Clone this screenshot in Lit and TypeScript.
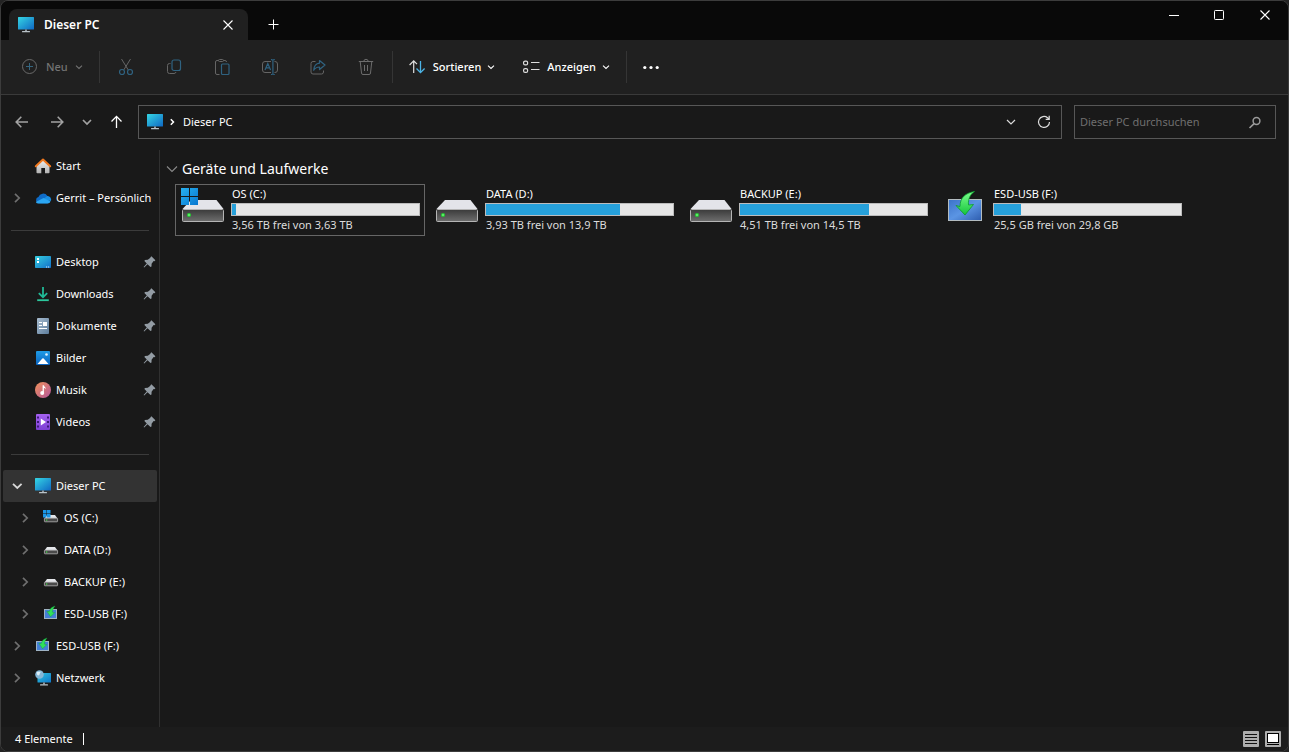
import { LitElement, html, svg, css, nothing, TemplateResult } from "lit";
import { customElement, property } from "lit/decorators.js";

type Icon = TemplateResult;

const screen = (id: string) => svg`
  <defs><linearGradient id=${id} x1="0" y1="0" x2="1" y2="1">
    <stop offset="0" stop-color="#35d6e4"/><stop offset="1" stop-color="#0f68c4"/></linearGradient></defs>
  <rect x="0" y="0" width="16" height="12.5" rx=".6" fill="url(#${id})"/>
  <rect x="7" y="12.500" width="2" height="2" fill="#8f979d"/><rect x="4" y="14" width="8" height="1.3" rx=".4" fill="#b9c2c8"/>`;

const smallDrive = svg`
  <path d="M4 5h8l2.5 3.5h-13z" fill="#e4e6ea"/>
  <rect x="1.4" y="8.2" width="13.2" height="3.6" rx=".5" fill="#4a4a4a" stroke="#b4b4b4" stroke-width=".8"/>
  <rect x="3" y="9.4" width="1.3" height="1.3" fill="#45d64a"/>`;

const smallUsb = svg`
  <rect x="1.5" y="3.500" width="12" height="9" fill="#4480d6" stroke="#9fb3c4"/>
  <path d="M12 0C8.600 1 6.800 2.800 6.200 5.600L3.800 5.200 7.600 10.800 11.800 6.600 9.400 6.200C9.600 3.800 10.400 2 12 0z" fill="#2fe05a" stroke="#129a34" stroke-width=".4"/>`;

const icons: Record<string, Icon> = {
  pc: screen("pcFill"),
  home: svg`
    <defs><linearGradient id="wall" x1="0" y1="0" x2="0" y2="1"><stop offset="0" stop-color="#f1f1f1"/><stop offset="1" stop-color="#b3b3b3"/></linearGradient></defs>
    <path d="M1.500 7.500 8 1.500 14.500 7.500V14.400a.8.8 0 0 1-.8.8H10V10H6.300V15.200H2.300a.8.8 0 0 1-.8-.8z" fill="url(#wall)"/>
    <path d="M.8 8.200 8 1.500 15.200 8.200" fill="none" stroke="#f0781e" stroke-width="2" stroke-linecap="round" stroke-linejoin="round"/>`,
  cloud: svg`
    <path d="M3.400 7A5 5 0 0 1 12.400 6 4 4 0 0 1 12.500 13.200H3.500A3.200 3.200 0 0 1 3.400 7z" fill="#0f6cc8"/>
    <path d="M9 8.500 12.300 6A3.700 3.700 0 0 1 15.900 11L9 9.500z" fill="#1a8fe3"/>
    <path d="M.8 11.900 8.500 8 15.600 11.500A3.300 3.300 0 0 1 12.500 13.500H3.600A3 3 0 0 1 .8 11.900z" fill="#2ba6f2"/>`,
  desktop: svg`
    <defs><linearGradient id="desk" x1="0" y1="0" x2="1" y2="1"><stop offset="0" stop-color="#35cfe0"/><stop offset="1" stop-color="#126fc8"/></linearGradient></defs>
    <rect x="0" y="2" width="16" height="12" rx=".8" fill="url(#desk)"/>
    <rect x="2" y="4" width="2" height="2" fill="#fff"/><rect x="2" y="7" width="2" height="2" fill="#fff"/>
    <path d="M11 13h1.200M13 13h1.200" stroke="#d7ecff"/>`,
  downloads: svg`
    <path d="M8 1V11M3.800 7.200 8 11.200 12.200 7.200" fill="none" stroke="#20b896" stroke-width="1.800"/>
    <path d="M2.200 14.200H13.800" stroke="#2cc79d" stroke-width="1.800"/>`,
  documents: svg`
    <defs><linearGradient id="doc" x1="0" y1="0" x2="1" y2="1"><stop offset="0" stop-color="#a9bdd0"/><stop offset="1" stop-color="#5d7d9c"/></linearGradient></defs>
    <rect x="2" y="0" width="12" height="16" rx="1" fill="url(#doc)"/>
    <path d="M4 4.500H7M4 7.500H7M4 10.500H12" stroke="#fff" stroke-width="1"/><rect x="8" y="4" width="4" height="4" fill="#fff"/>`,
  pictures: svg`
    <defs><linearGradient id="pic" x1="0" y1="0" x2="0" y2="1"><stop offset="0" stop-color="#1f9be6"/><stop offset="1" stop-color="#0a63c0"/></linearGradient></defs>
    <rect x="1" y="1" width="14" height="14" rx="1" fill="url(#pic)"/>
    <path d="M2.500 14 7.300 8.600a1 1 0 0 1 1.400 0L13.500 14z" fill="#fff"/><circle cx="11.500" cy="4.500" r="1.300" fill="#dff1ff"/>`,
  music: svg`
    <defs><linearGradient id="mus" x1="0" y1="0" x2="1" y2="1"><stop offset="0" stop-color="#f0925a"/><stop offset="1" stop-color="#b4559b"/></linearGradient></defs>
    <circle cx="8" cy="8" r="8" fill="url(#mus)"/>
    <path d="M7.600 10.500V3.200H8.900C9 4.800 11 5 11 7.200 10.200 6.200 9.500 6 8.900 6V10.800" fill="#fff"/><circle cx="7.200" cy="10.900" r="2" fill="#fff"/>`,
  videos: svg`
    <defs><linearGradient id="vid" x1="0" y1="0" x2="0" y2="1"><stop offset="0" stop-color="#a561f0"/><stop offset="1" stop-color="#7d3fd3"/></linearGradient></defs>
    <rect x="1" y="0" width="14" height="16" rx="1" fill="url(#vid)"/>
    <path d="M2 2.500h2v2h-2zM2 7h2v2h-2zM2 11.500h2v2h-2zM12 2.500h2v2h-2zM12 7h2v2h-2zM12 11.500h2v2h-2z" fill="#3c1a78"/>
    <path d="M5.800 4.500 11 8 5.800 11.500z" fill="#fff"/>`,
  drive: smallDrive,
  osDrive: svg`${smallDrive}
    <path d="M0 0h3.500v3.500H0zM4 0h3.500v3.500H4zM0 4h3.500v3.500H0zM4 4h3.500v3.500H4z" fill="#1b98e8"/>`,
  usb: smallUsb,
  network: svg`
    <defs><linearGradient id="net" x1="0" y1="0" x2="1" y2="1"><stop offset="0" stop-color="#2fc4dd"/><stop offset="1" stop-color="#0f78cc"/></linearGradient></defs>
    <rect x="2.500" y="3" width="13.500" height="9.500" rx=".6" fill="url(#net)"/>
    <rect x="8" y="12.500" width="2" height="2" fill="#8f979d"/><rect x="5" y="14.300" width="8" height="1.300" rx=".4" fill="#b9c2c8"/>
    <circle cx="4.500" cy="4.500" r="4.300" fill="#84b6d6"/><path d="M1.500 2.500C3 1 4 2.500 5.500 1.500 6 3 4 3.500 4.500 5 3 6 2 5 1.500 2.500z" fill="#dceef8"/>`,
  pin: svg`<path d="M10.400 2.300 14.400 6.300 13.400 7.200 12.600 7.100 10.600 9.700 10.500 12.500 9.500 12.900 6.500 10.200 3.200 13.500 2.600 12.900 5.800 9.500 3.400 7 3.900 6 6.800 5.700 9.400 3.800 9.400 3.200z" fill="#939ca4"/>`,
  right: svg`<path d="M6 3.800 10.200 8 6 12.200" fill="none" stroke="#6f6f6f" stroke-width="1.700"/>`,
  down: svg`<path d="M4 5.800 8.300 10 12.600 5.800" fill="none" stroke="#d8d8d8" stroke-width="1.800"/>`,
  smallDown: svg`<path d="M5 6.600 8 9.400 11 6.600" fill="none" stroke="currentColor" stroke-width="1.100"/>`,
  wideDown: svg`<path d="M3 5.500 8 10.500 13 5.500" fill="none" stroke="#8a8a8a" stroke-width="1.100"/>`,
  close: svg`<path d="M3.500 3.500 12.500 12.500M12.500 3.500 3.500 12.500" stroke="#fff" stroke-width="1.100"/>`,
  plus: svg`<path d="M8.500 2.500v10M3.500 7.500h10" stroke="#fff" stroke-width="1"/>`,
  minimize: svg`<path d="M4 8.500h10" stroke="#fff"/>`,
  maximize: svg`<rect x="3.500" y="3.500" width="9" height="9" rx=".8" fill="none" stroke="#fff"/>`,
  newItem: svg`<circle cx="8.500" cy="7.500" r="7" fill="none" stroke="#6a6a6a"/><path d="M8.500 4v7M5 7.500h7" stroke="#35657f"/>`,
  cut: svg`<path d="M3.500 0 10.300 11M12.500 0 5.700 11" stroke="#656565" fill="none"/>
    <circle cx="4" cy="13" r="2.500" fill="none" stroke="#2f6280" stroke-width="1.200"/><circle cx="12" cy="13" r="2.500" fill="none" stroke="#2f6280" stroke-width="1.200"/>`,
  copy: svg`<path d="M4.500 4.500H3.500a2 2 0 0 0-2 2V12.500a2 2 0 0 0 2 2H8a2 2 0 0 0 2-1.500" fill="none" stroke="#656565"/>
    <rect x="6" y="1" width="8.500" height="10.500" rx="2" fill="none" stroke="#2f6280" stroke-width="1.200"/>`,
  paste: svg`<path d="M5.500 15.500H3a1.500 1.500 0 0 1-1.500-1.500V3A1.500 1.500 0 0 1 3 1.500H4.500M9.500 1.500H11A1.500 1.500 0 0 1 12.500 3" fill="none" stroke="#656565"/>
    <rect x="4.500" y=".5" width="5" height="2" rx="1" fill="none" stroke="#656565"/><rect x="7.500" y="5" width="7.500" height="10.500" rx="1" fill="none" stroke="#2f6280" stroke-width="1.200"/>`,
  rename: svg`<path d="M9 13.500H3a2.500 2.500 0 0 1-2.500-2.500V5A2.500 2.500 0 0 1 3 2.500H9M12.500 2.500h.5A2.500 2.500 0 0 1 15.500 5v6a2.500 2.500 0 0 1-2.500 2.500h-.5" fill="none" stroke="#656565"/>
    <path d="M3 11 5.800 4.500 8.600 11M4 8.800H7.600M9 .6h1.500M12.800.6h-1.500M9 15.500h1.500M12.800 15.500h-1.500M10.900.8V15.400" fill="none" stroke="#2f6280" stroke-width="1.200"/>`,
  share: svg`<path d="M5.500 2.500H3A2 2 0 0 0 1 4.500V13a2 2 0 0 0 2 2h8.500a2 2 0 0 0 2-2V11.500" fill="none" stroke="#656565"/>
    <path d="M9.500 1.500 15 6 9.500 10.500V8C6.500 8 5 9 3.700 11.300 4 7.500 6 4.500 9.500 4.200z" fill="none" stroke="#2f6280" stroke-width="1.200" stroke-linejoin="round"/>`,
  trash: svg`<path d="M.8 2.500H15.200M5.800 2.500a2.200 2.200 0 0 1 4.400 0M2.200 2.500 3.500 14a1.500 1.500 0 0 0 1.500 1.500H11A1.500 1.500 0 0 0 12.500 14L13.800 2.500M6.500 6v6M9.500 6v6" fill="none" stroke="#6c6c6c"/>`,
  sort: svg`<path d="M4.700 14V2M.6 6 4.700 1.800 8 5.200" fill="none" stroke="#e0e0e0" stroke-width="1.200"/>
    <path d="M11.500 2V13.500M7.500 9.500 11.500 13.600 15.600 9.500" fill="none" stroke="#4cb4e6" stroke-width="1.300"/>`,
  view: svg`<rect x=".6" y="2.100" width="4" height="3.800" rx="1.500" fill="none" stroke="#dedede" stroke-width="1.200"/><rect x=".6" y="9.600" width="4" height="3.800" rx="1.500" fill="none" stroke="#dedede" stroke-width="1.200"/>
    <path d="M8 3.500h8.500M8 10.500h8.500" stroke="#dedede" stroke-width="1.100"/>`,
  more: svg`<circle cx="1.800" cy="8.500" r="1.600" fill="#fff"/><circle cx="8" cy="8.500" r="1.600" fill="#fff"/><circle cx="14.200" cy="8.500" r="1.600" fill="#fff"/>`,
  back: svg`<path d="M14 8H2.500M7.300 2.800 2.200 8 7.300 13.200" fill="none" stroke="#a2a2a2" stroke-width="1.600"/>`,
  forward: svg`<path d="M2 8H13.500M8.700 2.800 13.800 8 8.700 13.200" fill="none" stroke="#a2a2a2" stroke-width="1.600"/>`,
  history: svg`<path d="M4 6 8 10 12 6" fill="none" stroke="#a2a2a2" stroke-width="1.700"/>`,
  up: svg`<path d="M7.500 14V2.500M2.500 7.500 7.500 2.400 12.500 7.500" fill="none" stroke="#fff" stroke-width="1.300"/>`,
  crumb: svg`<path d="M5.800 5.200 8.500 8 5.800 10.800" fill="none" stroke="#fff" stroke-width="1.500"/>`,
  addressDown: svg`<path d="M4 6 8 10 12 6" fill="none" stroke="#dadada" stroke-width="1.200"/>`,
  refresh: svg`<path d="M13.500 8A5.500 5.500 0 1 1 11.500 3.700L13 5.200M13.200 1.800V5.300H9.700" fill="none" stroke="#dcdcdc" stroke-width="1.200"/>`,
  search: svg`<circle cx="9.500" cy="7" r="3.400" fill="none" stroke="#9a9a9a" stroke-width="1.500"/><path d="M7 9.700 2.500 14" stroke="#9a9a9a" stroke-width="1.700"/>`,
  listView: svg`<rect width="16" height="16" rx="1" fill="#adadad"/><path d="M2 3.500h12M2 6.500h12M2 9.500h12M2 12.500h12" stroke="#111"/>`,
  tileView: svg`<rect width="16" height="16" rx="1" fill="#adadad"/><rect x="2.500" y="2.500" width="11" height="9" fill="#fff" stroke="#000"/><path d="M2 13.500h12" stroke="#000"/>`,
};

@customElement("fx-icon")
class FxIcon extends LitElement {
  @property() name = "";
  static styles = css`
    :host { display: block; flex: none; width: 16px; height: 16px; }
    svg { display: block; width: 100%; height: 100%; overflow: visible; }
  `;
  render() {
    return html`<svg viewBox="0 0 16 16" aria-hidden="true">${icons[this.name]}</svg>`;
  }
}

@customElement("drive-picture")
class DrivePicture extends LitElement {
  @property() kind = "disk";
  static styles = css`
    :host { display: block; width: 48px; height: 48px; }
    svg { display: block; }
  `;
  render() {
    if (this.kind === "usb") {
      return html`<svg width="48" height="48" viewBox="1 0 48 48" aria-hidden="true">
        <defs>
          <linearGradient id="panel" x1="0" y1="0" x2="1" y2="1"><stop offset="0" stop-color="#3a72c8"/><stop offset=".5" stop-color="#5b95e4"/><stop offset="1" stop-color="#2d5cae"/></linearGradient>
          <linearGradient id="arrow" x1="0" y1="0" x2="0" y2="1"><stop offset="0" stop-color="#7dff8c"/><stop offset="1" stop-color="#14c43c"/></linearGradient>
        </defs>
        <rect x="7.500" y="14.500" width="33" height="21" fill="url(#panel)" stroke="#b3bcc0"/>
        <path d="M33.500 6.500C24.500 8 19 12.500 19 21.500L15 20.500 24 30 32.500 19.500 27.500 20C27 14 29 9.500 33.500 6.500z" fill="url(#arrow)" stroke="#0b9a2c" stroke-width=".8"/>
      </svg>`;
    }
    return html`<svg width="48" height="48" viewBox="0 1 48 48" aria-hidden="true">
      <defs>
        <linearGradient id="front" x1="0" y1="0" x2="0" y2="1"><stop offset="0" stop-color="#3a3a3a"/><stop offset="1" stop-color="#6e6e6e"/></linearGradient>
        <linearGradient id="flag" x1="0" y1="0" x2="1" y2="1"><stop offset="0" stop-color="#27b1f0"/><stop offset="1" stop-color="#0877d0"/></linearGradient>
      </defs>
      <path d="M11 16H36.500L43.500 25H2.500z" fill="#e3e4e9"/>
      <rect x="2.500" y="25.500" width="41" height="12" rx="1" fill="url(#front)" stroke="#b5b5b5"/>
      <circle cx="9" cy="31" r="2" fill="#23d331"/><circle cx="9" cy="31" r=".8" fill="#a9ffac"/>
      ${this.kind === "system" ? svg`<path d="M1 4h8v8H1zM10 4h8v8h-8zM1 13h8v8H1zM10 13h8v8h-8z" fill="url(#flag)"/>` : nothing}
    </svg>`;
  }
}

interface Drive { name: string; kind: string; free: number; total: number; unit: string; selected?: boolean; }
interface Place { label: string; icon: string; nested?: boolean; arrow?: string; pinned?: boolean; current?: boolean; }

const drives: Drive[] = [
  { name: "OS (C:)", kind: "system", free: 3.56, total: 3.63, unit: "TB", selected: true },
  { name: "DATA (D:)", kind: "disk", free: 3.93, total: 13.9, unit: "TB" },
  { name: "BACKUP (E:)", kind: "disk", free: 4.51, total: 14.5, unit: "TB" },
  { name: "ESD-USB (F:)", kind: "usb", free: 25.5, total: 29.8, unit: "GB" },
];

const places: Place[][] = [
  [
    { label: "Start", icon: "home" },
    { label: "Gerrit – Persönlich", icon: "cloud", arrow: "right" },
  ],
  [
    { label: "Desktop", icon: "desktop", pinned: true },
    { label: "Downloads", icon: "downloads", pinned: true },
    { label: "Dokumente", icon: "documents", pinned: true },
    { label: "Bilder", icon: "pictures", pinned: true },
    { label: "Musik", icon: "music", pinned: true },
    { label: "Videos", icon: "videos", pinned: true },
  ],
  [
    { label: "Dieser PC", icon: "pc", arrow: "down", current: true },
    { label: "OS (C:)", icon: "osDrive", arrow: "right", nested: true },
    { label: "DATA (D:)", icon: "drive", arrow: "right", nested: true },
    { label: "BACKUP (E:)", icon: "drive", arrow: "right", nested: true },
    { label: "ESD-USB (F:)", icon: "usb", arrow: "right", nested: true },
    { label: "ESD-USB (F:)", icon: "usb", arrow: "right" },
    { label: "Netzwerk", icon: "network", arrow: "right" },
  ],
];

const fileActions = [
  ["cut", "Ausschneiden"], ["copy", "Kopieren"], ["paste", "Einfügen"],
  ["rename", "Umbenennen"], ["share", "Freigeben"], ["trash", "Löschen"],
];

const number = (n: number) => n.toLocaleString("de-DE");

@customElement("app-root")
class AppRoot extends LitElement {
  static styles = css`
    :host { display: block; height: 100vh; background: #232323; font: 11px/16px "Noto Sans", "Open Sans", sans-serif; color: #fff; }
    * { box-sizing: border-box; }
    button { display: flex; align-items: center; justify-content: center; border: 0; padding: 0; background: none; color: inherit; font: inherit; }
    a { color: inherit; text-decoration: none; }
    ul { list-style: none; margin: 0; padding: 0; }
    .window { height: 100%; display: flex; flex-direction: column; border: 1px solid #3c3c3c; border-radius: 8px; overflow: hidden; background: #191919; }

    .titlebar { display: flex; height: 39px; padding-left: 8px; background: #090909; flex: none; }
    .tab { display: flex; align-items: center; width: 239px; margin-top: 8px; padding: 0 12px 0 9px; gap: 10px; background: #202020; border-radius: 8px 8px 0 0; font-size: 12px; font-weight: 600; }
    .tab button { margin-left: auto; }
    .new-tab { width: 50px; margin-top: 8px; }
    .caption { display: flex; margin-left: auto; }
    .caption button { width: 46px; height: 28px; }

    .commands { display: flex; align-items: center; height: 55px; padding-left: 20px; background: #202020; border-bottom: 1px solid #3a3a3a; flex: none; }
    .command { height: 32px; gap: 8px; font-weight: 500; }
    .command .chev { margin-left: -6px; }
    .disabled { color: #737373; }
    .rule { width: 1px; height: 32px; background: #353535; }
    .new { gap: 9px; margin-right: 12px; }
    .files { display: flex; gap: 16px; padding: 0 10px; }
    .files button { width: 32px; height: 32px; }
    .menus { display: flex; gap: 24px; padding: 0 12px 0 16px; }
    .more { width: 48px; height: 32px; }

    .navigation { display: flex; align-items: center; gap: 1px; height: 55px; padding: 0 12px 2px 4px; flex: none; }
    .arrow { width: 34px; height: 32px; }
    .history { width: 24px; height: 32px; }
    .address { display: flex; align-items: center; flex: 1; height: 34px; margin: 0 11px 0 3px; padding: 0 9px 0 8px; border: 1px solid #575757; }
    .address ul { display: flex; align-items: center; flex: 1; }
    .address li { display: flex; align-items: center; gap: 2px; }
    .address button { width: 16px; height: 32px; margin-left: 17px; }
    .search { display: flex; align-items: center; width: 202px; height: 34px; padding: 0 12px 0 5px; border: 1px solid #575757; }
    .search input { flex: 1; min-width: 0; height: 30px; padding: 0; border: 0; outline: 0; background: none; color: #fff; font: inherit; }
    .search input::placeholder { color: #6f6f6f; opacity: 1; }

    .body { display: flex; flex: 1; min-height: 0; }
    .sidebar { width: 159px; padding: 0 2px; border-right: 1px solid #303030; flex: none; }
    .group + .group::before { content: ""; display: block; height: 1px; margin: 16px 8px 15px; background: #3b3b3b; }
    .place { display: flex; align-items: center; height: 32px; padding: 0 0 0 6px; border-radius: 2px; white-space: nowrap; }
    .place.nested { padding-left: 14px; }
    .place.current { background: #333; }
    .slot { width: 16px; height: 16px; margin-right: 10px; }
    .label { margin-left: 5px; }
    .pin { margin-left: auto; }

    .content { flex: 1; min-width: 0; padding: 8px 8px 0 4px; }
    .heading { display: flex; align-items: center; gap: 2px; margin: 0 0 4px; font-size: 14px; line-height: 22px; font-weight: 400; }
    .drives { display: grid; grid-template-columns: repeat(auto-fill, 250px); gap: 4px; padding-left: 11px; }
    .drive { display: flex; gap: 3px; height: 52px; padding: 0 4px; border: 1px solid transparent; }
    .drive.selected { border-color: #666; }
    .info { flex: 1; padding-top: 1px; }
    .info p { margin: 0; padding-left: 1px; }
    .info .space { color: #dcdcdc; }
    .bar { height: 13px; margin: 1px 0; border: 1px solid #bcbcbc; background: #e6e6e6; }
    .fill { height: 100%; background: #26a0da; }

    .status { display: flex; align-items: center; height: 24px; padding: 0 7px 0 14px; background: #1c1c1c; flex: none; }
    .count { padding-right: 10px; border-right: 1px solid #fff; line-height: 12px; }
    .views { display: flex; gap: 6px; margin-left: auto; }
  `;

  place(p: Place) {
    return html`<li><a href="#" class="place ${p.nested ? "nested" : ""} ${p.current ? "current" : ""}">
      <span class="slot">${p.arrow ? html`<fx-icon name=${p.arrow}></fx-icon>` : nothing}</span>
      <fx-icon name=${p.icon}></fx-icon><span class="label">${p.label}</span>
      ${p.pinned ? html`<fx-icon class="pin" name="pin"></fx-icon>` : nothing}
    </a></li>`;
  }

  drive(d: Drive) {
    const used = ((d.total - d.free) / d.total) * 100;
    return html`<li class="drive ${d.selected ? "selected" : ""}">
      <drive-picture kind=${d.kind}></drive-picture>
      <div class="info">
        <p>${d.name}</p>
        <div class="bar" role="meter" aria-label="Belegt" aria-valuenow=${Math.round(used)}><div class="fill" style="width:${used}%"></div></div>
        <p class="space">${number(d.free)} ${d.unit} frei von ${number(d.total)} ${d.unit}</p>
      </div>
    </li>`;
  }

  render() {
    return html`<div class="window">
      <header class="titlebar">
        <div class="tab"><fx-icon name="pc"></fx-icon><span>Dieser PC</span>
          <button aria-label="Tab schließen"><fx-icon name="close"></fx-icon></button></div>
        <button class="new-tab" aria-label="Neuer Tab"><fx-icon name="plus"></fx-icon></button>
        <div class="caption">
          <button aria-label="Minimieren"><fx-icon name="minimize"></fx-icon></button>
          <button aria-label="Maximieren"><fx-icon name="maximize"></fx-icon></button>
          <button aria-label="Schließen"><fx-icon name="close"></fx-icon></button>
        </div>
      </header>

      <div class="commands" role="toolbar">
        <button class="command new disabled"><fx-icon name="newItem"></fx-icon><span>Neu</span><fx-icon class="chev" name="smallDown"></fx-icon></button>
        <span class="rule"></span>
        <div class="files">${fileActions.map(([icon, label]) => html`<button aria-label=${label}><fx-icon name=${icon}></fx-icon></button>`)}</div>
        <span class="rule"></span>
        <div class="menus">
          <button class="command"><fx-icon name="sort"></fx-icon><span>Sortieren</span><fx-icon class="chev" name="smallDown"></fx-icon></button>
          <button class="command"><fx-icon name="view"></fx-icon><span>Anzeigen</span><fx-icon class="chev" name="smallDown"></fx-icon></button>
        </div>
        <span class="rule"></span>
        <button class="more" aria-label="Mehr anzeigen"><fx-icon name="more"></fx-icon></button>
      </div>

      <div class="navigation">
        <button class="arrow" aria-label="Zurück"><fx-icon name="back"></fx-icon></button>
        <button class="arrow" aria-label="Vorwärts"><fx-icon name="forward"></fx-icon></button>
        <button class="history" aria-label="Zuletzt besucht"><fx-icon name="history"></fx-icon></button>
        <button class="arrow" aria-label="Nach oben"><fx-icon name="up"></fx-icon></button>
        <div class="address">
          <ul><li><fx-icon name="pc"></fx-icon><fx-icon name="crumb"></fx-icon><a href="#">Dieser PC</a></li></ul>
          <button aria-label="Vorherige Orte"><fx-icon name="addressDown"></fx-icon></button>
          <button aria-label="Aktualisieren"><fx-icon name="refresh"></fx-icon></button>
        </div>
        <label class="search"><input type="text" aria-label="Dieser PC durchsuchen" placeholder="Dieser PC durchsuchen"><fx-icon name="search"></fx-icon></label>
      </div>

      <div class="body">
        <nav class="sidebar">${places.map((g) => html`<ul class="group">${g.map((p) => this.place(p))}</ul>`)}</nav>
        <main class="content">
          <h2 class="heading"><fx-icon name="wideDown"></fx-icon>Geräte und Laufwerke</h2>
          <ul class="drives">${drives.map((d) => this.drive(d))}</ul>
        </main>
      </div>

      <footer class="status">
        <span class="count">4 Elemente</span>
        <div class="views">
          <button aria-label="Details"><fx-icon name="listView"></fx-icon></button>
          <button aria-label="Große Symbole"><fx-icon name="tileView"></fx-icon></button>
        </div>
      </footer>
    </div>`;
  }
}
